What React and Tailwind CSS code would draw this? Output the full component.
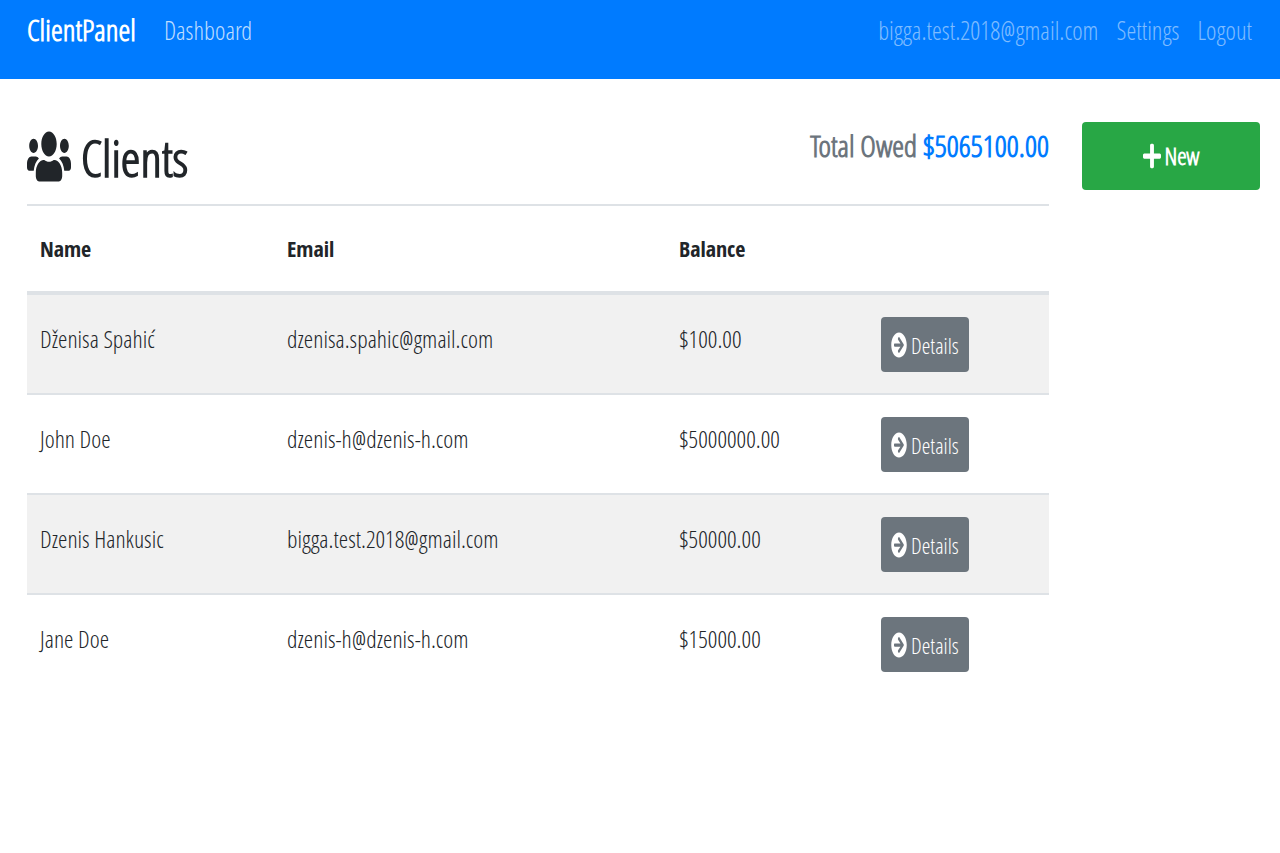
import { FaArrowCircleRight, FaPlus, FaUsers } from "react-icons/fa";

const clients = [
  { name: "Dženisa Spahić", email: "dzenisa.spahic@gmail.com", balance: "$100.00" },
  { name: "John Doe", email: "dzenis-h@dzenis-h.com", balance: "$5000000.00" },
  { name: "Dzenis Hankusic", email: "bigga.test.2018@gmail.com", balance: "$50000.00" },
  { name: "Jane Doe", email: "dzenis-h@dzenis-h.com", balance: "$15000.00" },
];

function Navbar() {
  return (
    <nav className="flex items-start justify-between bg-[#007bff] pt-[14px] pr-7 pb-[33px] pl-[27px] text-[25px] leading-8">
      <div className="flex items-center gap-7">
        <a href="#home" className="text-[30px] font-semibold text-white">ClientPanel</a>
        <a href="#dashboard" className="text-white/75">Dashboard</a>
      </div>
      <div className="flex items-center gap-[18px] text-white/50">
        <a href="#account">bigga.test.2018@gmail.com</a>
        <a href="#settings">Settings</a>
        <a href="#logout">Logout</a>
      </div>
    </nav>
  );
}

function ClientRow({ client }) {
  return (
    <tr className="h-[100px] border-t-2 border-[#dee2e6] align-top first:h-[101px] first:border-t-4 odd:bg-[#f1f1f1]">
      <td className="px-[13px] pt-7">{client.name}</td>
      <td className="px-[13px] pt-7">{client.email}</td>
      <td className="px-[13px] pt-7">{client.balance}</td>
      <td className="px-[13px] pt-[22px]">
        <button type="button" className="flex h-[55px] items-center gap-1 rounded bg-[#6c757d] px-[10px] text-[22px] text-white">
          <FaArrowCircleRight preserveAspectRatio="none" className="h-[26px] w-4" />
          Details
        </button>
      </td>
    </tr>
  );
}

export default function App() {
  return (
    <div className="min-h-screen bg-white font-['Open_Sans_Condensed_Light','Roboto_Condensed','Open_Sans',sans-serif] text-[24px] leading-8 text-[#212529]">
      <Navbar />
      <main className="grid grid-cols-[1022fr_178fr] items-start gap-[33px] pt-[43px] pr-5 pl-[27px]">
        <section>
          <header className="flex h-[82px] items-start justify-between">
            <h1 className="flex items-start gap-[10px] pt-[6px] text-[50px] leading-[60px] font-semibold">
              <FaUsers preserveAspectRatio="none" className="h-[57px] w-11" />
              Clients
            </h1>
            <p className="pt-2 text-[30px] font-semibold text-[#6c757d]">
              Total Owed <span className="text-[#007bff]">$5065100.00</span>
            </p>
          </header>
          <table className="w-full border-collapse text-left">
            <thead>
              <tr className="h-[88px] border-t-2 border-[#dee2e6] align-top font-['Open_Sans_Condensed','Open_Sans',sans-serif] text-[22px]">
                <th className="w-[247px] px-[13px] pt-[26px] font-bold">Name</th>
                <th className="w-[392px] px-[13px] pt-[26px] font-bold">Email</th>
                <th className="w-[202px] px-[13px] pt-[26px] font-bold">Balance</th>
                <th className="w-[181px] px-[13px]" aria-label="Actions" />
              </tr>
            </thead>
            <tbody>
              {clients.map((client) => (
                <ClientRow key={client.name} client={client} />
              ))}
            </tbody>
          </table>
        </section>
        <button type="button" className="flex h-[68px] items-center justify-center gap-1 rounded bg-[#28a745] font-semibold text-white">
          <FaPlus preserveAspectRatio="none" className="h-7 w-[18px]" />
          New
        </button>
      </main>
    </div>
  );
}
